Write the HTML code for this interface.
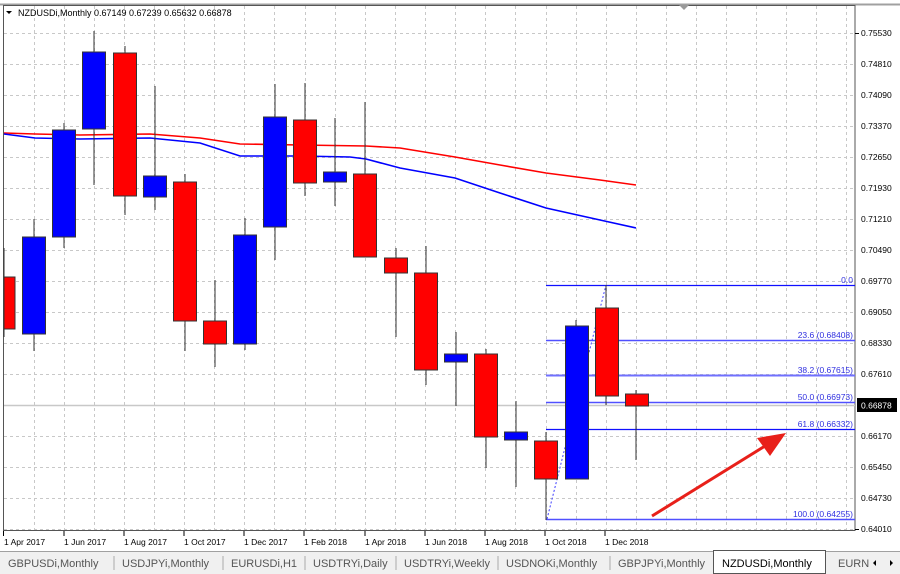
<!DOCTYPE html>
<html><head><meta charset="utf-8"><style>
body{margin:0;width:900px;height:574px;overflow:hidden;background:#fff;font-family:"Liberation Sans",sans-serif}
svg{position:absolute;left:0;top:0}
</style></head><body>
<svg width="900" height="574" viewBox="0 0 900 574" xmlns="http://www.w3.org/2000/svg" font-family="Liberation Sans, sans-serif">
<rect x="0" y="0" width="900" height="574" fill="#fff"/>
<line x1="0" y1="4.5" x2="900" y2="4.5" stroke="#a0a0a0" stroke-width="2"/>
<rect x="3.5" y="5.5" width="851.5" height="525" fill="#fff" stroke="#555" stroke-width="1"/>
<g stroke="#c8c8c8" stroke-dasharray="3,3" stroke-width="1">
<line x1="34.5" y1="6" x2="34.5" y2="530"/><line x1="64.5" y1="6" x2="64.5" y2="530"/><line x1="94.5" y1="6" x2="94.5" y2="530"/><line x1="124.5" y1="6" x2="124.5" y2="530"/><line x1="154.5" y1="6" x2="154.5" y2="530"/><line x1="184.5" y1="6" x2="184.5" y2="530"/><line x1="214.5" y1="6" x2="214.5" y2="530"/><line x1="244.5" y1="6" x2="244.5" y2="530"/><line x1="274.5" y1="6" x2="274.5" y2="530"/><line x1="305.5" y1="6" x2="305.5" y2="530"/><line x1="335.5" y1="6" x2="335.5" y2="530"/><line x1="365.5" y1="6" x2="365.5" y2="530"/><line x1="395.5" y1="6" x2="395.5" y2="530"/><line x1="425.5" y1="6" x2="425.5" y2="530"/><line x1="455.5" y1="6" x2="455.5" y2="530"/><line x1="485.5" y1="6" x2="485.5" y2="530"/><line x1="515.5" y1="6" x2="515.5" y2="530"/><line x1="546.5" y1="6" x2="546.5" y2="530"/><line x1="576.5" y1="6" x2="576.5" y2="530"/><line x1="606.5" y1="6" x2="606.5" y2="530"/><line x1="636.5" y1="6" x2="636.5" y2="530"/><line x1="666.5" y1="6" x2="666.5" y2="530"/><line x1="696.5" y1="6" x2="696.5" y2="530"/><line x1="726.5" y1="6" x2="726.5" y2="530"/><line x1="756.5" y1="6" x2="756.5" y2="530"/><line x1="786.5" y1="6" x2="786.5" y2="530"/><line x1="816.5" y1="6" x2="816.5" y2="530"/><line x1="846.5" y1="6" x2="846.5" y2="530"/>
<line x1="4" y1="33.5" x2="855" y2="33.5"/><line x1="4" y1="64.5" x2="855" y2="64.5"/><line x1="4" y1="95.5" x2="855" y2="95.5"/><line x1="4" y1="126.5" x2="855" y2="126.5"/><line x1="4" y1="157.5" x2="855" y2="157.5"/><line x1="4" y1="188.5" x2="855" y2="188.5"/><line x1="4" y1="219.5" x2="855" y2="219.5"/><line x1="4" y1="250.5" x2="855" y2="250.5"/><line x1="4" y1="281.5" x2="855" y2="281.5"/><line x1="4" y1="312.5" x2="855" y2="312.5"/><line x1="4" y1="343.5" x2="855" y2="343.5"/><line x1="4" y1="374.5" x2="855" y2="374.5"/><line x1="4" y1="405.5" x2="855" y2="405.5"/><line x1="4" y1="436.5" x2="855" y2="436.5"/><line x1="4" y1="467.5" x2="855" y2="467.5"/><line x1="4" y1="498.5" x2="855" y2="498.5"/><line x1="4" y1="529.5" x2="855" y2="529.5"/>
</g>
<polygon points="679,5 689,5 684,10" fill="#999"/>
<line x1="4" y1="405.5" x2="855" y2="405.5" stroke="#c8c8c8" stroke-width="1.5"/>
<!-- fib -->
<line x1="546" y1="285.5" x2="855" y2="285.5" stroke="#1010ff" stroke-width="1.2"/>
<line x1="546" y1="340.5" x2="855" y2="340.5" stroke="#5050ff" stroke-width="1.5"/>
<line x1="546" y1="375.5" x2="855" y2="375.5" stroke="#7070ff" stroke-width="2"/>
<line x1="546" y1="402.5" x2="855" y2="402.5" stroke="#5050ff" stroke-width="1.5"/>
<line x1="546" y1="429.5" x2="855" y2="429.5" stroke="#1010ff" stroke-width="1.2"/>
<line x1="546" y1="519.5" x2="855" y2="519.5" stroke="#5050ff" stroke-width="1.5"/>
<line x1="547" y1="519" x2="606" y2="285" stroke="#4040ff" stroke-width="1" stroke-dasharray="2,2"/>
<g font-size="8.5" fill="#3030e0" text-anchor="end">
<text x="853" y="283">0.0</text><text x="853" y="338">23.6 (0.68408)</text><text x="853" y="373">38.2 (0.67615)</text><text x="853" y="400">50.0 (0.66973)</text><text x="853" y="427">61.8 (0.66332)</text><text x="853" y="517">100.0 (0.64255)</text>
</g>
<polyline fill="none" stroke="#ff0000" stroke-width="1.6" points="4,133 35,134 80,135 150,134 200,138 240,144 300,145 366,146 400,148 455,157 500,165 546,173 600,180 636,185"/>
<polyline fill="none" stroke="#0000ff" stroke-width="1.6" points="4,134 35,138 80,139 150,138 200,143 240,156 300,156 350,157 366,159 400,168 455,178 500,193 546,208 600,220 636,228"/>
<g stroke="#333" stroke-width="1">
<line x1="4" y1="248" x2="4" y2="337"/><rect x="4" y="277" width="11" height="52" fill="#f00"/>
<line x1="34" y1="219" x2="34" y2="351"/><rect x="22.5" y="237" width="23" height="97" fill="#00f"/>
<line x1="64" y1="123" x2="64" y2="248"/><rect x="52.5" y="130" width="23" height="107" fill="#00f"/>
<line x1="94" y1="31" x2="94" y2="185"/><rect x="82.5" y="52" width="23" height="77" fill="#00f"/>
<line x1="125" y1="46" x2="125" y2="215"/><rect x="113.5" y="53" width="23" height="143" fill="#f00"/>
<line x1="155" y1="86" x2="155" y2="210"/><rect x="143.5" y="176" width="23" height="21" fill="#00f"/>
<line x1="185" y1="174" x2="185" y2="351"/><rect x="173.5" y="182" width="23" height="139" fill="#f00"/>
<line x1="215" y1="280" x2="215" y2="367"/><rect x="203.5" y="321" width="23" height="23" fill="#f00"/>
<line x1="245" y1="218" x2="245" y2="350"/><rect x="233.5" y="235" width="23" height="109" fill="#00f"/>
<line x1="275" y1="84" x2="275" y2="260"/><rect x="263.5" y="117" width="23" height="110" fill="#00f"/>
<line x1="305" y1="83" x2="305" y2="196"/><rect x="293.5" y="120" width="23" height="63" fill="#f00"/>
<line x1="335" y1="118" x2="335" y2="206"/><rect x="323.5" y="172" width="23" height="10" fill="#00f"/>
<line x1="365" y1="102" x2="365" y2="257"/><rect x="353.5" y="174" width="23" height="83" fill="#f00"/>
<line x1="396" y1="248" x2="396" y2="337"/><rect x="384.5" y="258" width="23" height="15" fill="#f00"/>
<line x1="426" y1="246" x2="426" y2="385"/><rect x="414.5" y="273" width="23" height="97" fill="#f00"/>
<line x1="456" y1="332" x2="456" y2="406"/><rect x="444.5" y="354" width="23" height="8" fill="#00f"/>
<line x1="486" y1="349" x2="486" y2="468"/><rect x="474.5" y="354" width="23" height="83" fill="#f00"/>
<line x1="516" y1="401" x2="516" y2="487"/><rect x="504.5" y="432" width="23" height="8" fill="#00f"/>
<line x1="546" y1="432" x2="546" y2="520"/><rect x="534.5" y="441" width="23" height="38" fill="#f00"/>
<line x1="576" y1="320" x2="576" y2="479"/><rect x="565.5" y="326" width="23" height="153" fill="#00f"/>
<line x1="606" y1="285" x2="606" y2="405"/><rect x="595.5" y="308" width="23" height="88" fill="#f00"/>
<line x1="636" y1="390" x2="636" y2="460"/><rect x="625.5" y="394" width="23" height="12" fill="#f00"/>
</g>
<line x1="652" y1="516" x2="765" y2="446" stroke="#e8201a" stroke-width="3"/>
<polygon points="786,433 757,438 770,456" fill="#e8201a"/>
<polygon points="6,11 12,11 9,14" fill="#000"/>
<text x="18" y="16" font-size="9" fill="#000">NZDUSDi,Monthly  0.67149 0.67239 0.65632 0.66878</text>
<g font-size="8.5" fill="#000">
<text x="861" y="36">0.75530</text><text x="861" y="67">0.74810</text><text x="861" y="98">0.74090</text><text x="861" y="129">0.73370</text><text x="861" y="160">0.72650</text><text x="861" y="191">0.71930</text><text x="861" y="222">0.71210</text><text x="861" y="253">0.70490</text><text x="861" y="284">0.69770</text><text x="861" y="315">0.69050</text><text x="861" y="346">0.68330</text><text x="861" y="377">0.67610</text><text x="861" y="439">0.66170</text><text x="861" y="470">0.65450</text><text x="861" y="501">0.64730</text><text x="861" y="532">0.64010</text>
</g>
<g stroke="#000"><line x1="855" y1="33.5" x2="859" y2="33.5"/><line x1="855" y1="529.5" x2="859" y2="529.5"/></g>
<rect x="857" y="398" width="40" height="14" fill="#000"/>
<text x="861" y="408.5" font-size="8.5" fill="#fff">0.66878</text>
<g font-size="8.5" fill="#000">
<text x="4" y="545">1 Apr 2017</text><text x="64" y="545">1 Jun 2017</text><text x="124" y="545">1 Aug 2017</text><text x="184" y="545">1 Oct 2017</text><text x="244" y="545">1 Dec 2017</text><text x="304" y="545">1 Feb 2018</text><text x="365" y="545">1 Apr 2018</text><text x="425" y="545">1 Jun 2018</text><text x="485" y="545">1 Aug 2018</text><text x="545" y="545">1 Oct 2018</text><text x="605" y="545">1 Dec 2018</text>
</g>
<g stroke="#000"><line x1="3.5" y1="531" x2="3.5" y2="536"/><line x1="64" y1="531" x2="64" y2="536"/><line x1="124" y1="531" x2="124" y2="536"/><line x1="184" y1="531" x2="184" y2="536"/><line x1="244" y1="531" x2="244" y2="536"/><line x1="304" y1="531" x2="304" y2="536"/><line x1="365" y1="531" x2="365" y2="536"/><line x1="425" y1="531" x2="425" y2="536"/><line x1="485" y1="531" x2="485" y2="536"/><line x1="545" y1="531" x2="545" y2="536"/><line x1="605" y1="531" x2="605" y2="536"/></g>
<rect x="0" y="551" width="900" height="23" fill="#f0f0f0"/>
<line x1="0" y1="551.5" x2="900" y2="551.5" stroke="#a0a0a0"/>
<rect x="713.5" y="550.5" width="112" height="23" fill="#fff" stroke="#555"/>
<g font-size="11" fill="#555">
<text x="8" y="567">GBPUSDi,Monthly</text><text x="122" y="567">USDJPYi,Monthly</text><text x="231" y="567">EURUSDi,H1</text><text x="313" y="567">USDTRYi,Daily</text><text x="404" y="567">USDTRYi,Weekly</text><text x="506" y="567">USDNOKi,Monthly</text><text x="618" y="567">GBPJPYi,Monthly</text><text x="838" y="567">EURN</text>
</g>
<text x="722" y="567" font-size="11" fill="#000">NZDUSDi,Monthly</text>
<g stroke="#aaa"><line x1="114" y1="556" x2="114" y2="570"/><line x1="223" y1="556" x2="223" y2="570"/><line x1="305" y1="556" x2="305" y2="570"/><line x1="396" y1="556" x2="396" y2="570"/><line x1="498" y1="556" x2="498" y2="570"/><line x1="610" y1="556" x2="610" y2="570"/></g>
<polygon points="873,563 876,560 876,566" fill="#000"/>
<polygon points="890,560 893,563 890,566" fill="#000"/>
</svg>
</body></html>
